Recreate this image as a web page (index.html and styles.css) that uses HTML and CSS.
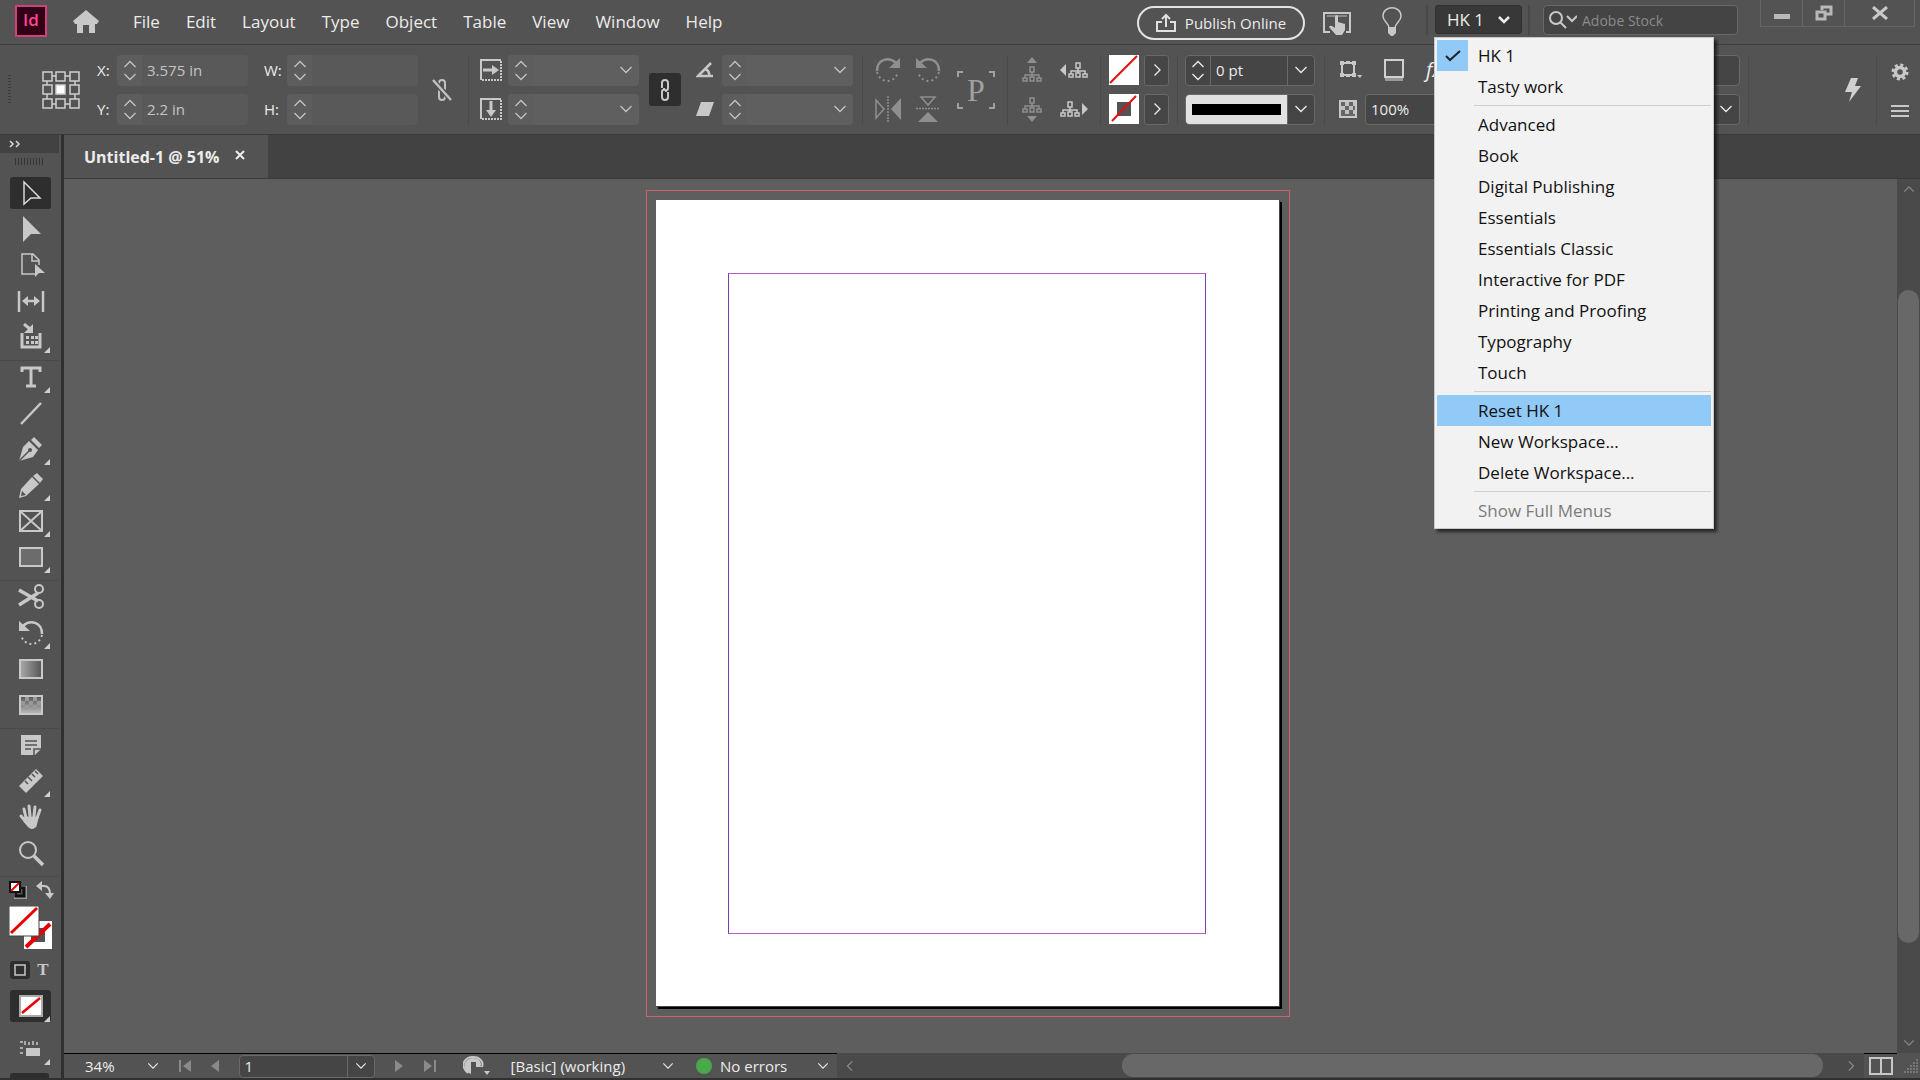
FILE: index.html
```html
<!DOCTYPE html>
<html lang="en">
<head>
    <meta charset="UTF-8">
    <meta name="viewport" content="width=device-width, initial-scale=1.0">
    <title>Untitled-1 @ 51%</title>
    <link rel="stylesheet" href="styles.css">
</head>
<body>
    <!-- Shared icons -->
    <svg class="icon-defs" aria-hidden="true">
        <symbol id="chev-down" viewBox="0 0 14 8"><path d="M1.5 1L7 6.5 12.5 1" fill="none" stroke="currentColor" stroke-width="1.3"/></symbol>
        <symbol id="chev-up" viewBox="0 0 14 8"><path d="M1.5 7L7 1.5 12.5 7" fill="none" stroke="currentColor" stroke-width="1.3"/></symbol>
        <symbol id="chev-right" viewBox="0 0 8 14"><path d="M1.5 1.5L7 7l-5.5 5.5" fill="none" stroke="currentColor" stroke-width="1.3"/></symbol>
        <symbol id="chev-left" viewBox="0 0 8 14"><path d="M6.5 1.5L1 7l5.5 5.5" fill="none" stroke="currentColor" stroke-width="1.3"/></symbol>
        <symbol id="tree" viewBox="0 0 20 16"><path d="M8 1h4v5H8zM10 6v5M3 12V9h14v3M1 12h4v3H1zM8 11h4v4H8zM15 12h4v3h-4z" fill="none" stroke="currentColor" stroke-width="1.5"/></symbol>
        <symbol id="rotate" viewBox="0 0 26 26"><path d="M2 14C2 2 14-1 21 6" fill="none" stroke="currentColor" stroke-width="2.5"/><path d="M25 1v10H14z" fill="currentColor"/><path d="M2 15c3 12 18 12 21 0" fill="none" stroke="currentColor" stroke-width="2" stroke-dasharray="2 3"/></symbol>
        <symbol id="link" viewBox="0 0 14 24"><path d="M4 10V5c0-4 6-4 6 0v5c0 3-4 3-4 0M10 14v5c0 4-6 4-6 0v-5c0-3 4-3 4 0" fill="none" stroke="currentColor" stroke-width="2"/></symbol>
    </svg>

    <!-- Application bar -->
    <header class="app-bar">
        <div class="logo">Id</div>
        <button class="home" aria-label="Home">
            <svg width="28" height="24" viewBox="0 0 28 24"><path d="M14 0l13 11-2 3h-2v9h-6v-8h-6v8H5v-9H3l-2-3z" fill="#c8c8c8"/></svg>
        </button>
        <nav class="menu-bar">
            <a href="#">File</a>
            <a href="#">Edit</a>
            <a href="#">Layout</a>
            <a href="#">Type</a>
            <a href="#">Object</a>
            <a href="#">Table</a>
            <a href="#">View</a>
            <a href="#">Window</a>
            <a href="#">Help</a>
        </nav>
        <div class="app-tools">
            <button class="publish">
                <svg width="20" height="20" viewBox="0 0 20 20" fill="none" stroke="#e0e0e0" stroke-width="2"><path d="M6 9H1v9h18V9h-5M10 14V3M6 6l4-4 4 4"/></svg>
                Publish Online
            </button>
            <button class="touch" aria-label="Touch workspace">
                <svg width="28" height="24" viewBox="0 0 28 24"><path d="M0 1h28v21h-5v-2h3V3H2v17h5v2H0z" fill="#c8c8c8"/><path d="M4 4h20v2H4z" fill="#8a8a8a"/><path d="M12 5q2-2 3 0v6l7 2v6l-3 5h-6l-7-8q1-2 3-1l3 2z" fill="#c8c8c8"/></svg>
            </button>
            <button class="tips" aria-label="Learn">
                <svg width="20" height="30" viewBox="0 0 20 30"><path d="M7 21c0-5-6-6-6-12C1-2 19-2 19 9c0 6-6 7-6 12z" fill="none" stroke="#c8c8c8" stroke-width="1.5"/><path d="M6 20h8v6l-3 3H9l-3-3z" fill="#c8c8c8"/></svg>
            </button>
            <div class="workspace">
                <button class="workspace-btn" aria-haspopup="menu" aria-expanded="true">HK 1
                    <svg width="12" height="8" viewBox="0 0 12 8"><path d="M1 1l5 5 5-5" fill="none" stroke="#eee" stroke-width="2.5"/></svg>
                </button>
                <!-- Workspace menu -->
                <div class="workspace-menu" role="menu">
                    <button class="checked" role="menuitemradio" aria-checked="true"><svg width="16" height="12" viewBox="0 0 16 12"><path d="M1 6l4 4L15 1" fill="none" stroke="#222" stroke-width="2"/></svg>HK 1</button>
                    <button role="menuitem">Tasty work</button>
                    <hr>
                    <button role="menuitem">Advanced</button>
                    <button role="menuitem">Book</button>
                    <button role="menuitem">Digital Publishing</button>
                    <button role="menuitem">Essentials</button>
                    <button role="menuitem">Essentials Classic</button>
                    <button role="menuitem">Interactive for PDF</button>
                    <button role="menuitem">Printing and Proofing</button>
                    <button role="menuitem">Typography</button>
                    <button role="menuitem">Touch</button>
                    <hr>
                    <button class="active" role="menuitem">Reset HK 1</button>
                    <button role="menuitem">New Workspace...</button>
                    <button role="menuitem">Delete Workspace...</button>
                    <hr>
                    <button role="menuitem" disabled>Show Full Menus</button>
                </div>
            </div>
            <label class="search">
                <svg width="28" height="18" viewBox="0 0 28 18" fill="none" stroke="#c8c8c8" stroke-width="2"><circle cx="7" cy="7" r="6"/><path d="M11 11l6 6M18 5l5 5 5-5"/></svg>
                <input type="text" placeholder="Adobe Stock" aria-label="Search Adobe Stock">
            </label>
            <div class="window-btns">
                <button aria-label="Minimize"><svg width="16" height="14" viewBox="0 0 16 14"><path d="M0 8h16v5H0z" fill="#b8b8b8"/></svg></button>
                <button aria-label="Restore"><svg width="18" height="16" viewBox="0 0 18 16" fill="none" stroke="#b8b8b8" stroke-width="3"><path d="M7 5V2h9v7h-5M2 7h8v7H2z"/></svg></button>
                <button class="close" aria-label="Close"><svg width="16" height="14" viewBox="0 0 16 14"><path d="M1 1l14 12M15 1L1 13" stroke="#c8c8c8" stroke-width="3"/></svg></button>
            </div>
        </div>
    </header>

    <!-- Control panel -->
    <section class="control-bar">
        <div class="grip"></div>
        <svg class="ref-point" width="38" height="38" viewBox="0 0 38 38" fill="none" stroke="#d0d0d0" stroke-width="1.5"><path d="M1 1h9v9H1zM14 1h9v9h-9zM28 1h9v9h-9zM1 14h9v9H1zM28 14h9v9h-9zM1 28h9v9H1zM14 28h9v9h-9zM28 28h9v9h-9zM10 5h4M23 5h5M10 33h4M23 33h5M5 10v4M5 23v5M33 10v4M33 23v5"/><path d="M14 14h9v9h-9z" fill="#fff"/></svg>

        <div class="pair position">
            <label for="pos-x">X:</label>
            <div class="field muted"><span class="spin"><svg><use href="#chev-up"/></svg><svg><use href="#chev-down"/></svg></span><input id="pos-x" type="text" value="3.575 in"></div>
            <label for="pos-y">Y:</label>
            <div class="field muted"><span class="spin"><svg><use href="#chev-up"/></svg><svg><use href="#chev-down"/></svg></span><input id="pos-y" type="text" value="2.2 in"></div>
        </div>
        <div class="pair">
            <label for="size-w">W:</label>
            <div class="field muted"><span class="spin"><svg><use href="#chev-up"/></svg><svg><use href="#chev-down"/></svg></span><input id="size-w" type="text"></div>
            <label for="size-h">H:</label>
            <div class="field muted"><span class="spin"><svg><use href="#chev-up"/></svg><svg><use href="#chev-down"/></svg></span><input id="size-h" type="text"></div>
        </div>
        <button class="unlink" aria-label="Constrain proportions"><svg width="20" height="24" viewBox="0 0 20 24"><use href="#link" x="3" width="14" height="24"/><path d="M1 2l18 20" stroke="#535353" stroke-width="5"/><path d="M1 2l18 20" stroke="#c0c0c0" stroke-width="2.5"/></svg></button>
        <i class="rule"></i>

        <div class="pair icons">
            <label for="scale-x" aria-label="Scale X"><svg width="22" height="22" viewBox="0 0 22 22" fill="none" stroke="#c8c8c8" stroke-width="2"><path d="M21 1H1v20"/><path d="M2 21h19V2" stroke-dasharray="2 1"/><path d="M3 11h10" stroke-width="3"/><path d="M12 6l7 5-7 5z" fill="#c8c8c8" stroke="none"/></svg></label>
            <div class="field combo"><span class="spin"><svg><use href="#chev-up"/></svg><svg><use href="#chev-down"/></svg></span><input id="scale-x" type="text"><button aria-label="Scale X presets"><svg><use href="#chev-down"/></svg></button></div>
            <label for="scale-y" aria-label="Scale Y"><svg width="22" height="22" viewBox="0 0 22 22" fill="none" stroke="#c8c8c8" stroke-width="2"><path d="M21 1H1v20"/><path d="M2 21h19V2" stroke-dasharray="2 1"/><path d="M11 3v10" stroke-width="3"/><path d="M6 12l5 7 5-7z" fill="#c8c8c8" stroke="none"/></svg></label>
            <div class="field combo"><span class="spin"><svg><use href="#chev-up"/></svg><svg><use href="#chev-down"/></svg></span><input id="scale-y" type="text"><button aria-label="Scale Y presets"><svg><use href="#chev-down"/></svg></button></div>
        </div>
        <button class="link-btn" aria-label="Constrain scaling"><svg width="14" height="24"><use href="#link"/></svg></button>
        <div class="pair angles">
            <label for="angle" aria-label="Rotation angle"><svg width="18" height="16" viewBox="0 0 18 16"><path d="M15 1L2 14h15M9 7q5 2 4 7" fill="none" stroke="#c8c8c8" stroke-width="2.5"/></svg></label>
            <div class="field combo"><span class="spin"><svg><use href="#chev-up"/></svg><svg><use href="#chev-down"/></svg></span><input id="angle" type="text"><button aria-label="Rotation presets"><svg><use href="#chev-down"/></svg></button></div>
            <label for="shear" aria-label="Shear angle"><svg width="18" height="16" viewBox="0 0 18 16"><path d="M5 1h13l-5 14H0z" fill="#c8c8c8"/></svg></label>
            <div class="field combo"><span class="spin"><svg><use href="#chev-up"/></svg><svg><use href="#chev-down"/></svg></span><input id="shear" type="text"><button aria-label="Shear presets"><svg><use href="#chev-down"/></svg></button></div>
        </div>
        <i class="rule"></i>

        <div class="icon-grid dim">
            <button aria-label="Rotate clockwise"><svg width="26" height="26"><use href="#rotate"/></svg></button>
            <button aria-label="Rotate counter-clockwise"><svg width="26" height="26" viewBox="0 0 26 26"><g transform="translate(26 0) scale(-1 1)"><use href="#rotate" width="26" height="26"/></g></svg></button>
            <button aria-label="Flip horizontal"><svg width="26" height="26" viewBox="0 0 26 26"><path d="M1 4v18l8-9z" fill="none" stroke="currentColor" stroke-width="1.5"/><path d="M26 2v22l-10-11z" fill="currentColor"/><path d="M13 0v26" stroke="currentColor" stroke-width="1.5" stroke-dasharray="2 1"/></svg></button>
            <button aria-label="Flip vertical"><svg width="26" height="26" viewBox="0 0 26 26"><path d="M6 1h14l-7 8z" fill="none" stroke="currentColor" stroke-width="1.5"/><path d="M3 26h20L13 16z" fill="currentColor"/><path d="M1 12.500h24" stroke="currentColor" stroke-width="1.5" stroke-dasharray="2 1"/></svg></button>
        </div>
        <div class="para-mark"><span>P</span><svg width="38" height="38" viewBox="0 0 38 38" fill="none" stroke="#a0a0a0" stroke-width="2"><path d="M1 6V1h5M32 1h5v5M1 32v5h5M32 37h5v-5"/></svg></div>
        <i class="rule"></i>

        <div class="icon-grid trees">
            <button class="dim" aria-label="Select container"><svg width="28" height="28" viewBox="0 0 28 28"><path d="M14 1l5 6H9z" fill="currentColor"/><use href="#tree" x="4" y="10" width="20" height="16"/></svg></button>
            <button aria-label="Select previous object"><svg width="28" height="28" viewBox="0 0 28 28"><path d="M0 14l6-6v12z" fill="currentColor"/><use href="#tree" x="8" y="6" width="20" height="16"/></svg></button>
            <button class="dim" aria-label="Select content"><svg width="28" height="28" viewBox="0 0 28 28"><use href="#tree" x="4" y="2" width="20" height="16"/><path d="M14 27l5-6H9z" fill="currentColor"/></svg></button>
            <button aria-label="Select next object"><svg width="28" height="28" viewBox="0 0 28 28"><use href="#tree" x="0" y="6" width="20" height="16"/><path d="M28 14l-6-6v12z" fill="currentColor"/></svg></button>
        </div>
        <i class="rule"></i>

        <div class="swatches">
            <svg width="30" height="30" viewBox="0 0 30 30"><path d="M0 0h30v30H0z" fill="#fff"/><path d="M1 28L28 1" stroke="#e01010" stroke-width="2"/></svg>
            <button class="box-btn" aria-label="Fill options"><svg width="8" height="14"><use href="#chev-right"/></svg></button>
            <svg width="30" height="30" viewBox="0 0 30 30"><path d="M0 0h30v30H0z" fill="#fff"/><path d="M8 8h14v14H8z" fill="#535353"/><path d="M3 27L27 2" stroke="#e01010" stroke-width="2"/></svg>
            <button class="box-btn" aria-label="Stroke options"><svg width="8" height="14"><use href="#chev-right"/></svg></button>
        </div>
        <i class="rule"></i>

        <div class="stroke">
            <div class="field dark"><span class="spin"><svg><use href="#chev-up"/></svg><svg><use href="#chev-down"/></svg></span><input type="text" value="0 pt" aria-label="Stroke weight"><button aria-label="Stroke weight presets"><svg><use href="#chev-down"/></svg></button></div>
            <div class="field dark"><span class="stroke-line"></span><button aria-label="Stroke type"><svg><use href="#chev-down"/></svg></button></div>
        </div>
        <i class="rule"></i>

        <div class="effects">
            <div class="row">
                <svg width="24" height="20" viewBox="0 0 24 20"><path d="M3 3h12v12H3z" fill="none" stroke="#c8c8c8" stroke-width="2"/><path d="M1 1h4v4H1zM13 1h4v4h-4zM1 13h4v4H1zM13 13h4v4h-4zM7 1h4v3H7zM7 14h4v3H7zM18 15h5l-2 3z" fill="#c8c8c8"/></svg>
                <svg width="20" height="22" viewBox="0 0 20 22"><path d="M1 17h18v5H1z" fill="#999"/><path d="M1 1h18v17H1z" fill="#535353" stroke="#d0d0d0" stroke-width="2"/></svg>
                <span class="fx">fx</span>
                <div class="field dark"><input type="text" aria-label="Effect"></div>
            </div>
            <div class="row">
                <svg width="18" height="18" viewBox="0 0 18 18"><path d="M1 1h16v16H1z" fill="#666" stroke="#c8c8c8" stroke-width="2"/><path d="M6 2h4v4H6zM2 6h4v4H2zM10 6h4v4h-4zM6 10h4v4H6zM14 2h2v4h-2zM14 10h2v4h-2z" fill="#c0c0c0"/></svg>
                <div class="field dark"><input type="text" value="100%" aria-label="Opacity"><button class="plain" aria-label="Opacity presets"><svg><use href="#chev-down"/></svg></button></div>
            </div>
        </div>
        <i class="rule"></i>
        <button class="bolt" aria-label="Quick apply"><svg width="18" height="26" viewBox="0 0 18 26"><path d="M7 1h7l-3 8h6L5 25l3-10H1z" fill="#d0d0d0"/></svg></button>
        <i class="rule"></i>
        <div class="panel-opts">
            <button aria-label="Customize"><svg width="18" height="18" viewBox="0 0 18 18"><circle cx="9" cy="9" r="7" fill="none" stroke="#c8c8c8" stroke-width="3" stroke-dasharray="3 2.5"/><circle cx="9" cy="9" r="4.5" fill="none" stroke="#c8c8c8" stroke-width="3.5"/></svg></button>
            <button aria-label="Panel menu"><svg width="18" height="12" viewBox="0 0 18 12"><path d="M0 1h18M0 6h18M0 11h18" stroke="#c8c8c8" stroke-width="2"/></svg></button>
        </div>
    </section>

    <main class="work-area">
        <!-- Tools panel -->
        <aside class="tools">
            <div class="tools-head"><svg width="12" height="8" viewBox="0 0 12 8"><path d="M1 1l3 3-3 3M7 1l3 3-3 3" fill="none" stroke="#d8d8d8" stroke-width="1.5"/></svg></div>
            <div class="tools-grip"></div>
            <div class="tool-group">
                <button class="tool selected" aria-label="Selection"><svg width="28" height="28" viewBox="0 0 28 28"><path d="M7 3v22l7-6h9z" fill="none" stroke="#d8d8d8" stroke-width="1.5"/></svg></button>
                <button class="tool" aria-label="Direct selection"><svg width="28" height="28" viewBox="0 0 28 28"><path d="M6 1v26l8-8h10z" fill="#c8c8c8"/></svg></button>
                <button class="tool" aria-label="Page"><svg width="28" height="28" viewBox="0 0 28 28"><path d="M18 23H5V3h11l6 6v5M15 3v7h7" fill="none" stroke="#c8c8c8" stroke-width="1.5"/><path d="M18 13v13l4-4h6z" fill="#c8c8c8"/></svg></button>
                <button class="tool" aria-label="Gap"><svg width="28" height="28" viewBox="0 0 28 28"><path d="M2 4v21M26 4v21M7 14h14" stroke="#c8c8c8" stroke-width="2.5"/><path d="M5 14l6-5v10zM23 14l-6-5v10z" fill="#c8c8c8"/></svg></button>
                <button class="tool more" aria-label="Content collector"><svg width="28" height="28" viewBox="0 0 28 28"><path d="M5 10v14h18V10" fill="none" stroke="#c8c8c8" stroke-width="3"/><path d="M7 1l6 5" stroke="#c8c8c8" stroke-width="3"/><path d="M16 1v9H7z" fill="#c8c8c8"/><path d="M9 13h3v3H9zM14 13h3v3h-3zM18 13h3v3h-3zM9 18h3v3H9zM14 18h3v3h-3zM18 18h3v3h-3z" fill="#c8c8c8"/></svg></button>
            </div>
            <div class="tool-group">
                <button class="tool more" aria-label="Type"><svg width="28" height="28" viewBox="0 0 28 28"><path d="M5 9V5h18v4M14 5v18M9 23h10" fill="none" stroke="#c8c8c8" stroke-width="3"/></svg></button>
                <button class="tool" aria-label="Line"><svg width="28" height="28" viewBox="0 0 28 28"><path d="M4 25L24 4" stroke="#c8c8c8" stroke-width="2.5"/></svg></button>
                <button class="tool more" aria-label="Pen"><svg width="28" height="28" viewBox="0 0 28 28"><path d="M17 2l8 8-3 3-8-8zM12 6l9 9-5 7-14 4 4-14z" fill="#c8c8c8"/><path d="M2 26l10-10" stroke="#535353" stroke-width="1.5"/><circle cx="13" cy="15" r="2" fill="#535353"/></svg></button>
                <button class="tool more" aria-label="Pencil"><svg width="28" height="28" viewBox="0 0 28 28"><path d="M20 2l6 6-3 4-7-7zM15 6l7 7L9 25l-7 2 2-9z" fill="#c8c8c8"/><path d="M4 25l1-5 4 4z" fill="#535353"/></svg></button>
                <button class="tool more" aria-label="Rectangle frame"><svg width="28" height="28" viewBox="0 0 28 28"><path d="M3 4h22v20H3zM3 4l22 20M25 4L3 24" fill="none" stroke="#c8c8c8" stroke-width="2"/></svg></button>
                <button class="tool more" aria-label="Rectangle"><svg width="28" height="28" viewBox="0 0 28 28"><path d="M3 5h22v18H3z" fill="#6c6c6c" stroke="#c8c8c8" stroke-width="2"/></svg></button>
            </div>
            <div class="tool-group">
                <button class="tool" aria-label="Scissors"><svg width="28" height="28" viewBox="0 0 28 28"><path d="M2 7l19 11M2 22l19-12" stroke="#c8c8c8" stroke-width="3.5"/><circle cx="22" cy="6" r="4" fill="none" stroke="#c8c8c8" stroke-width="2"/><circle cx="22" cy="21" r="4" fill="none" stroke="#c8c8c8" stroke-width="2"/></svg></button>
                <button class="tool more" aria-label="Rotate"><svg class="light" width="26" height="26" viewBox="0 0 26 26"><g transform="translate(26 0) scale(-1 1)"><use href="#rotate" width="26" height="26"/></g></svg></button>
                <button class="tool" aria-label="Gradient"><svg width="28" height="28" viewBox="0 0 28 28"><defs><linearGradient id="grad"><stop stop-color="#aaa"/><stop offset="1" stop-color="#555"/></linearGradient></defs><path d="M3 5h22v18H3z" fill="url(#grad)" stroke="#c8c8c8" stroke-width="2"/></svg></button>
                <button class="tool" aria-label="Gradient feather"><svg width="28" height="28" viewBox="0 0 28 28"><defs><linearGradient id="feather" x2="0" y2="1"><stop stop-color="#555"/><stop offset="1" stop-color="#bbb"/></linearGradient></defs><path d="M3 5h22v18H3z" fill="url(#feather)" stroke="#c8c8c8" stroke-width="2"/><path d="M8 6h4v4H8zM16 6h4v4h-4zM4 10h4v4H4zM12 10h4v4h-4zM20 10h4v4h-4zM8 14h4v4H8zM16 14h4v4h-4z" fill="#999"/></svg></button>
            </div>
            <div class="tool-group">
                <button class="tool" aria-label="Note"><svg width="28" height="28" viewBox="0 0 28 28"><path d="M4 4h20v14l-6 6H4z" fill="#c8c8c8"/><path d="M8 10h12M8 14h12M8 18h6M17 25v-7h8" fill="none" stroke="#535353" stroke-width="1.5"/></svg></button>
                <button class="tool more" aria-label="Measure"><svg width="28" height="28" viewBox="0 0 28 28"><path d="M19 2l7 7L9 26l-7-7z" fill="#c8c8c8"/><path d="M8 14l3 3M11 10l4 4M15 7l3 3M18 4l3 3" stroke="#535353" stroke-width="1.5"/></svg></button>
                <button class="tool" aria-label="Hand"><svg width="28" height="28" viewBox="0 0 28 28" fill="none" stroke="#c8c8c8" stroke-width="3" stroke-linecap="round"><path d="M9 15L7 6M13 13l-1-10M17 13l1-9M20 15l3-8M9 19l-5-6"/><path d="M9 15h11l-2 8q-3 3-6 0l-4-5z" fill="#c8c8c8"/></svg></button>
                <button class="tool" aria-label="Zoom"><svg width="28" height="28" viewBox="0 0 28 28" fill="none" stroke="#c8c8c8"><circle cx="11" cy="11" r="8" stroke-width="2"/><path d="M17 17l9 9" stroke-width="3.5"/></svg></button>
            </div>
            <div class="color-row">
                <svg width="18" height="18" viewBox="0 0 18 18"><path d="M7 7h9v9H7z" fill="none" stroke="#999" stroke-width="4"/><path d="M7 7h8v8H7z" fill="none" stroke="#111" stroke-width="3"/><path d="M1 1h10v10H1z" fill="#fff" stroke="#111" stroke-width="2"/><path d="M2 10l8-8" stroke="#e00" stroke-width="2"/></svg>
                <svg width="18" height="18" viewBox="0 0 18 18"><path d="M4 5h4q6 0 6 8" fill="none" stroke="#c8c8c8" stroke-width="2"/><path d="M0 5l6-5v10zM9 12h9l-4 6z" fill="#c8c8c8"/></svg>
            </div>
            <svg class="fill-stroke" width="44" height="44" viewBox="0 0 44 44"><path d="M15 15h28v28H15z" fill="#fff"/><path d="M22 22h14v14H22z" fill="#535353"/><path d="M17 41l24-23" stroke="#e80000" stroke-width="4"/><path d="M0 0h30v30H0z" fill="#fff" stroke="#444"/><path d="M2 27L28 2" stroke="#e80000" stroke-width="3"/></svg>
            <div class="format-row">
                <button class="selected" aria-label="Formatting affects container"><svg width="12" height="12" viewBox="0 0 12 12"><path d="M1 1h10v10H1z" fill="none" stroke="#c8c8c8" stroke-width="1.5"/></svg></button>
                <button aria-label="Formatting affects text">T</button>
            </div>
            <button class="apply tool selected more" aria-label="Apply none"><svg width="24" height="22" viewBox="0 0 24 22"><path d="M1 1h22v20H1z" fill="#fff" stroke="#aaa" stroke-width="2"/><path d="M3 18L21 3" stroke="#e80000" stroke-width="2.5"/></svg></button>
            <button class="view-mode tool more" aria-label="View options"><svg width="22" height="18" viewBox="0 0 22 18"><path d="M6 8h14v8H6z" fill="#c8c8c8"/><path d="M5 1v4M9 2v3M13 1v4M17 2v3M0 2h3M0 8h3M0 13h3" stroke="#c8c8c8" stroke-width="1.5"/></svg></button>
            <div class="screen-mode"></div>
        </aside>

        <div class="document">
            <div class="tab-strip">
                <div class="tab">Untitled-1 @ 51%
                    <button aria-label="Close tab"><svg width="10" height="10" viewBox="0 0 10 10"><path d="M1 1l8 8M9 1L1 9" stroke="#eee" stroke-width="2"/></svg></button>
                </div>
            </div>
            <div class="canvas-row">
                <div class="canvas">
                    <div class="bleed">
                        <div class="page"><div class="margins"></div></div>
                    </div>
                </div>
                <div class="v-scroll">
                    <svg><use href="#chev-up"/></svg>
                    <div class="track"><div class="thumb"></div></div>
                    <svg><use href="#chev-down"/></svg>
                </div>
            </div>

            <!-- Status bar -->
            <footer class="status-bar">
                <div class="status-info">
                    <button class="zoom">34% <svg><use href="#chev-down"/></svg></button>
                    <button class="nav-first" aria-label="First page"><svg width="14" height="14" viewBox="0 0 14 14"><path d="M1 1h2v12H1zM13 1v12L5 7z" fill="#8a8a8a"/></svg></button>
                    <button class="nav-prev" aria-label="Previous page"><svg width="8" height="14" viewBox="0 0 8 14"><path d="M8 1v12L0 7z" fill="#8a8a8a"/></svg></button>
                    <div class="field dark page-no"><input type="text" value="1" aria-label="Page"><button aria-label="Pages"><svg><use href="#chev-down"/></svg></button></div>
                    <button class="nav-next" aria-label="Next page"><svg width="8" height="14" viewBox="0 0 8 14"><path d="M0 1v12l8-6z" fill="#8a8a8a"/></svg></button>
                    <button class="nav-last" aria-label="Last page"><svg width="14" height="14" viewBox="0 0 14 14"><path d="M11 1h2v12h-2zM1 1v12l8-6z" fill="#8a8a8a"/></svg></button>
                    <button class="open-page" aria-label="Open page"><svg width="28" height="20" viewBox="0 0 28 20"><path d="M5 17C-4 9 2 1 10 1c7 0 11 5 9 10" fill="none" stroke="#c8c8c8" stroke-width="2"/><path d="M4 16C-2 8 4 2 10 2s8 3 8 7h-5V6H8v12z" fill="#c8c8c8"/><path d="M13 6v6h7v6h-9V8z" fill="#535353"/><path d="M13 5l6 6h-6z" fill="#c8c8c8"/><path d="M21 15h6l-3 4z" fill="#c8c8c8"/></svg></button>
                    <button class="profile">[Basic] (working) <svg><use href="#chev-down"/></svg></button>
                    <button class="preflight"><i></i>No errors <svg><use href="#chev-down"/></svg></button>
                </div>
                <div class="h-scroll">
                    <svg><use href="#chev-left"/></svg>
                    <div class="track"><div class="thumb"></div></div>
                    <svg><use href="#chev-right"/></svg>
                </div>
                <button class="split" aria-label="Split view"><svg width="24" height="18" viewBox="0 0 24 18"><path d="M1 1h22v16H1zM12 1v16" fill="none" stroke="#c8c8c8" stroke-width="2"/></svg></button>
                <svg class="resize" width="14" height="14" viewBox="0 0 14 14"><path d="M12 1h2M9 4h5M6 7h8M3 10h11M0 13h14" stroke="#777" stroke-width="2" stroke-dasharray="2 1"/></svg>
            </footer>
        </div>
    </main>
</body>
</html>
```
FILE: styles.css
```css
* {
    box-sizing: border-box;
}

body {
    margin: 0;
    height: 100vh;
    display: flex;
    flex-direction: column;
    overflow: hidden;
    background: #535353;
    color: #ececec;
    font-family: "Open Sans", sans-serif;
    font-size: 15px;
}

button {
    display: flex;
    align-items: center;
    justify-content: center;
    padding: 0;
    border: 0;
    background: none;
    color: inherit;
    font: inherit;
    white-space: nowrap;
}

input {
    flex: 1;
    width: 0;
    min-width: 0;
    padding: 0 0 0 5px;
    border: 0;
    outline: 0;
    background: none;
    color: inherit;
    font: inherit;
}

svg {
    flex: none;
    display: block;
}

.icon-defs {
    position: absolute;
    width: 0;
    height: 0;
}

/* Application bar */
.app-bar {
    flex: none;
    display: flex;
    height: 45px;
    padding-left: 15px;
    border-bottom: 1px solid #3e3e3e;
}

.logo {
    width: 32px;
    height: 32px;
    margin-top: 5px;
    border: 2px solid #d0417c;
    background: #320014;
    color: #ff4595;
    font-size: 17px;
    font-weight: 600;
    line-height: 26px;
    text-align: center;
}

.home {
    margin-left: 25px;
}

.menu-bar {
    display: flex;
    gap: 26px;
    margin-left: 33px;
}

.menu-bar a {
    color: #ececec;
    font-size: 17px;
    line-height: 43px;
    text-decoration: none;
}

.app-tools {
    display: flex;
    align-items: flex-start;
    margin-left: auto;
}

.publish {
    gap: 9px;
    width: 168px;
    height: 34px;
    margin-top: 6px;
    border: 2px solid #e4e4e4;
    border-radius: 17px;
}

.touch {
    margin: 11px 0 0 18px;
}

.tips {
    margin: 7px 24px 0 31px;
}

.workspace {
    position: relative;
    height: 30px;
    margin-top: 5px;
    padding: 0 6px 0 7px;
    border: solid #484848;
    border-width: 0 2px;
}

.workspace-btn {
    gap: 14px;
    width: 87px;
    height: 29px;
    border: 1px solid #303030;
    border-radius: 3px;
    background: #383838;
    font-size: 17px;
}

.workspace-menu {
    position: absolute;
    top: 32px;
    left: 6px;
    z-index: 10;
    width: 280px;
    padding: 2px;
    border: 1px solid #c8c8c8;
    background: #f2f2f2;
    box-shadow: 3px 3px 3px rgba(0, 0, 0, 0.6);
}

.workspace-menu button {
    justify-content: flex-start;
    width: 100%;
    height: 31px;
    padding-left: 41px;
    color: #111;
    font-size: 17px;
}

.workspace-menu button:disabled {
    color: #7c7c7c;
}

.workspace-menu .active {
    background: #91c9f7;
}

.workspace-menu .checked {
    padding-left: 0;
    background: linear-gradient(90deg, #91c9f7 31px, transparent 31px);
}

.checked svg {
    margin: 0 17px 0 8px;
}

.workspace-menu hr {
    height: 1px;
    margin: 3px 0 3px 37px;
    border: 0;
    background: #d0d0d0;
}

.search {
    display: flex;
    align-items: center;
    width: 195px;
    height: 30px;
    margin: 5px 22px 0 13px;
    padding-left: 5px;
    border: 1px solid #686868;
    border-radius: 4px;
    background: #444;
    font-size: 14px;
}

.search input::placeholder {
    color: #8a8a8a;
    opacity: 1;
}

.window-btns {
    display: flex;
    height: 27px;
    margin-right: 5px;
    border: 1px solid #666;
    border-top: 0;
}

.window-btns button {
    width: 42px;
    border-right: 1px solid #666;
}

.window-btns .close {
    width: 69px;
    border-right: 0;
}

/* Control panel */
.control-bar {
    flex: none;
    display: flex;
    align-items: center;
    height: 90px;
    border-bottom: 1px solid #3a3a3a;
}

.grip {
    width: 3px;
    height: 30px;
    margin-left: 8px;
    background: repeating-linear-gradient(#3a3a3a 0 1px, transparent 1px 3px);
}

.ref-point {
    margin: 0 17px 0 31px;
}

.rule {
    width: 1px;
    height: 70px;
    background: #4a4a4a;
}

.pair {
    display: grid;
    grid-template-columns: 23px 131px;
    gap: 8px 0;
    align-items: center;
    margin-left: 16px;
}

.position {
    grid-template-columns: 20px 131px;
    margin-left: 0;
}

.icons {
    grid-template-columns: 28px 131px;
    margin-left: 11px;
}

.angles {
    grid-template-columns: 26px 131px;
    margin: 0 9px 0 15px;
}

.field {
    display: flex;
    height: 31px;
    border-radius: 4px;
    background: #5f5f5f;
    color: #c4c4c4;
    overflow: hidden;
}

.muted {
    background: #595959;
}

.field svg {
    width: 14px;
    height: 8px;
}

.spin {
    display: flex;
    flex-direction: column;
    align-items: center;
    justify-content: space-between;
    width: 25px;
    padding: 5px 0;
    background: #5d5d5d;
}

.field button {
    width: 27px;
}

.unlink {
    margin: 0 16px 0 14px;
    color: #c0c0c0;
}

.link-btn {
    width: 32px;
    height: 33px;
    margin-left: 10px;
    border-radius: 3px;
    background: #2e2e2e;
    color: #c8c8c8;
}

.icon-grid {
    display: grid;
    grid-template-columns: 26px 26px;
    gap: 13px 14px;
    margin-left: 12px;
    color: #c8c8c8;
}

.trees {
    grid-template-columns: 28px 28px;
    gap: 11px 14px;
    margin: 0 12px 0 10px;
}

.dim {
    color: #8f8f8f;
}

.para-mark {
    display: grid;
    width: 38px;
    height: 38px;
    margin: 0 12px 0 16px;
    color: #a0a0a0;
    font-family: "Liberation Serif", serif;
    font-size: 32px;
    line-height: 38px;
    text-align: center;
}

.para-mark > * {
    grid-area: 1 / 1;
}

.swatches {
    display: grid;
    grid-template-columns: 30px 25px;
    gap: 8px 5px;
    align-items: center;
    margin: 0 8px;
}

.box-btn {
    height: 31px;
    border: 1px solid #686868;
    border-radius: 3px;
    background: #464646;
}

.stroke {
    display: grid;
    gap: 8px;
    width: 130px;
    margin: 0 9px 0 7px;
}

.dark {
    border: 1px solid #696969;
    background: #454545;
    color: #ececec;
}

.dark .spin {
    padding: 4px 0;
    border-right: 1px solid #696969;
    background: none;
}

.dark button {
    border-left: 1px solid #696969;
}

.dark .plain {
    border: 0;
}

.stroke-line {
    flex: 1;
    border: solid #e2e2e2;
    border-width: 9px 6px;
    background: #000;
}

.effects {
    display: grid;
    gap: 8px;
    width: 401px;
    margin: 0 8px 0 14px;
}

.row {
    display: flex;
    align-items: center;
    gap: 8px;
}

.row .field {
    flex: 1;
}

.row svg + svg {
    margin: 0 14px 0 13px;
}

.fx {
    font-size: 20px;
    font-style: italic;
    line-height: 24px;
}

.bolt {
    margin: 0 14px 0 auto;
}

.panel-opts {
    display: grid;
    gap: 24px;
    margin: 0 11px 0 14px;
}

/* Tools panel */
.work-area {
    flex: 1;
    display: flex;
    min-height: 0;
    border-bottom: 2px solid #303030;
}

.tools {
    flex: none;
    width: 64px;
    padding-right: 2px;
    border-right: 3px solid #303030;
    overflow: hidden;
}

.tools-head {
    height: 18px;
    padding: 5px 9px;
    background: #424242;
}

.tools-grip {
    width: 29px;
    height: 7px;
    margin: 5px 0 12px 15px;
    background: repeating-linear-gradient(90deg, #363636 0 1px, transparent 1px 3px);
}

.tool-group {
    padding-bottom: 3px;
    border-bottom: 1px solid #4a4a4a;
}

.tool {
    position: relative;
    width: 41px;
    height: 32px;
    margin: 0 0 4px 10px;
}

.selected {
    border-radius: 3px;
    background: #2e2e2e;
}

/* Corner triangle marks tools with a flyout */
.more::after {
    content: "";
    position: absolute;
    right: 1px;
    bottom: 0;
    border: solid transparent;
    border-width: 3px;
    border-right-color: #d0d0d0;
    border-bottom-color: #d0d0d0;
}

.light {
    color: #c8c8c8;
}

.color-row {
    display: flex;
    gap: 9px;
    padding: 4px 0 7px 9px;
}

.fill-stroke {
    margin-left: 9px;
}

.format-row {
    display: flex;
    gap: 3px;
    margin: 11px 0 11px 10px;
}

.format-row button {
    width: 20px;
    height: 18px;
    color: #c8c8c8;
    font-family: "Liberation Serif", serif;
    font-size: 17px;
    font-weight: bold;
}

.view-mode {
    margin-top: 11px;
}

.screen-mode {
    height: 10px;
    margin: 8px 10px 0;
    border-radius: 3px;
    background: #2e2e2e;
}

/* Document window */
.document {
    flex: 1;
    display: flex;
    flex-direction: column;
    min-width: 0;
}

.tab-strip {
    flex: none;
    display: flex;
    height: 44px;
    border-bottom: 1px solid #3a3a3a;
    background: #424242;
}

.tab {
    display: flex;
    align-items: center;
    gap: 15px;
    width: 204px;
    padding-left: 20px;
    background: #535353;
    font-size: 16px;
    font-weight: bold;
    white-space: nowrap;
}

.tab button {
    margin-bottom: 4px;
}

.canvas-row {
    flex: 1;
    display: flex;
    min-height: 0;
}

.canvas {
    flex: 1;
    display: flex;
    justify-content: center;
    padding: 11px 26px 36px 0;
    background: #5e5e5e;
}

.bleed {
    display: flex;
    height: 100%;
    aspect-ratio: 644 / 827;
    padding: 9px;
    border: 1px solid #d2606e;
}

.page {
    flex: 1;
    display: flex;
    padding: 73px 73px 72px 72px;
    border: solid #444;
    border-width: 0 1px 1px 0;
    background: #fff;
    box-shadow: 2px 2px 0 #000;
}

.margins {
    flex: 1;
    border: 1px solid #b45fc0;
    border-left-color: #7b3fb0;
    border-right-color: #7b3fb0;
}

.v-scroll {
    display: flex;
    flex-direction: column;
    align-items: center;
    width: 23px;
    padding: 6px 0;
    background: #4a4a4a;
    color: #8c8c8c;
}

.v-scroll svg {
    width: 12px;
    height: 8px;
}

.track {
    flex: 1;
}

.thumb {
    border-radius: 11px;
    background: #686868;
}

.v-scroll .track {
    padding: 97px 0 96px;
}

.v-scroll .thumb {
    width: 21px;
    height: 100%;
}

/* Status bar */
.status-bar {
    flex: none;
    display: flex;
    height: 25px;
}

.status-info {
    display: flex;
    align-items: center;
    border-top: 1px solid #000;
}

.status-info button svg:last-child:not([width]) {
    width: 12px;
    height: 8px;
}

.zoom {
    gap: 32px;
    margin-left: 21px;
}

.nav-first {
    margin-left: 19px;
}

.nav-prev {
    margin: 0 20px 0 19px;
}

.page-no {
    width: 136px;
    height: 23px;
}

.nav-next {
    margin: 0 20px;
}

.open-page {
    margin: 0 20px 0 26px;
}

.profile {
    gap: 37px;
}

.preflight {
    gap: 8px;
    margin: 0 8px 0 22px;
}

.preflight svg {
    margin-left: 22px;
}

.preflight i {
    width: 16px;
    height: 16px;
    border-radius: 50%;
    background: #49a847;
}

.h-scroll {
    flex: 1;
    display: flex;
    align-items: center;
    background: #4a4a4a;
    color: #8c8c8c;
    padding: 0 9px;
}

.h-scroll svg {
    width: 8px;
    height: 12px;
}

.h-scroll .track {
    padding: 0 24px 0 268px;
}

.h-scroll .thumb {
    height: 23px;
}

.split {
    width: 33px;
    border-top: 1px solid #000;
}

.resize {
    align-self: center;
    margin: 0 2px 0 7px;
}
```
